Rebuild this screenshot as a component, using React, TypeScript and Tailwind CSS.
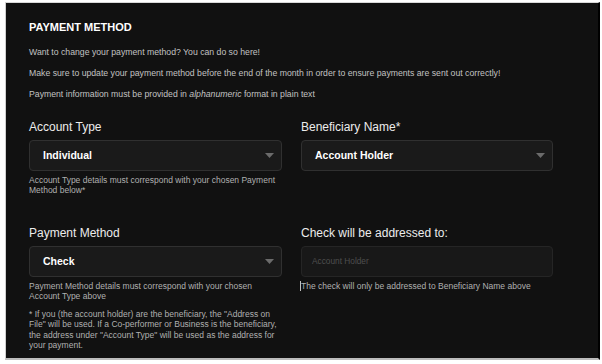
import React from 'react'

function Caret() {
  return (
    <svg width="9" height="5" viewBox="0 0 9 5" className="shrink-0">
      <path d="M0 0 L9 0 L4.5 5 Z" fill="#6b6b6b" />
    </svg>
  )
}

function Select({ value }: { value: string }) {
  return (
    <div className="mt-[5px] h-[31px] flex items-center justify-between pl-[13px] pr-[7px] bg-[#1a1a1a] border border-[#303030] rounded-[4px]">
      <span className="text-[10.5px] font-bold text-white">{value}</span>
      <Caret />
    </div>
  )
}

function Label({ children }: { children: React.ReactNode }) {
  return <div className="text-[12px] leading-[16px] text-[#ececec]">{children}</div>
}

function Help({ children }: { children: React.ReactNode }) {
  return <div className="mt-[4px] text-[8.5px] leading-[10px] text-[#b0b0b0]">{children}</div>
}

export default function App() {
  return (
    <div className="w-[602px] h-[364px] bg-white pl-[5px] pt-[2px] pr-[2px] pb-[4px] font-['Liberation_Sans',Arial,sans-serif]">
      <div className="h-full border-l border-[#cfcfcf] border-t border-t-[#d8d8d8] border-b-2 border-b-[#bdbdbd] border-r-2 border-r-black bg-[#111111] pl-[23px] pr-[44px] pt-[17px] overflow-hidden">
        <h1 className="text-[11px] leading-[14px] font-bold text-white">PAYMENT METHOD</h1>
        <div className="mt-[8px] text-[8.7px] leading-[21px] text-[#c2c2c2]">
          <p>Want to change your payment method? You can do so here!</p>
          <p>Make sure to update your payment method before the end of the month in order to ensure payments are sent out correctly!</p>
          <p>
            Payment information must be provided in <i>alphanumeric</i> format in plain text
          </p>
        </div>

        <div className="mt-[14px] grid grid-cols-[253px_252px] gap-x-[19px]">
          <div className="h-[106px]">
            <Label>Account Type</Label>
            <Select value="Individual" />
            <Help>
              Account Type details must correspond with your chosen Payment
              <br />
              Method below*
            </Help>
          </div>
          <div className="h-[106px]">
            <Label>Beneficiary Name*</Label>
            <Select value="Account Holder" />
          </div>

          <div>
            <Label>Payment Method</Label>
            <Select value="Check" />
            <Help>
              Payment Method details must correspond with your chosen
              <br />
              Account Type above
            </Help>
            <p className="mt-[8px] text-[8.5px] leading-[10.3px] text-[#b0b0b0]">
              * If you (the account holder) are the beneficiary, the "Address on File" will be used. If a Co-performer or
              Business is the beneficiary, the address under "Account Type" will be used as the address for your payment.
            </p>
          </div>
          <div>
            <Label>Check will be addressed to:</Label>
            <div className="mt-[5px] h-[31px] flex items-center pl-[10px] bg-[#181818] border border-[#252525] rounded-[4px]">
              <span className="text-[8.3px] text-[#4f4f4f]">Account Holder</span>
            </div>
            <Help>
              <span className="border-l border-[#c0c0c0] -ml-[1px]">The check will only be addressed to Beneficiary Name above</span>
            </Help>
          </div>
        </div>
      </div>
    </div>
  )
}
